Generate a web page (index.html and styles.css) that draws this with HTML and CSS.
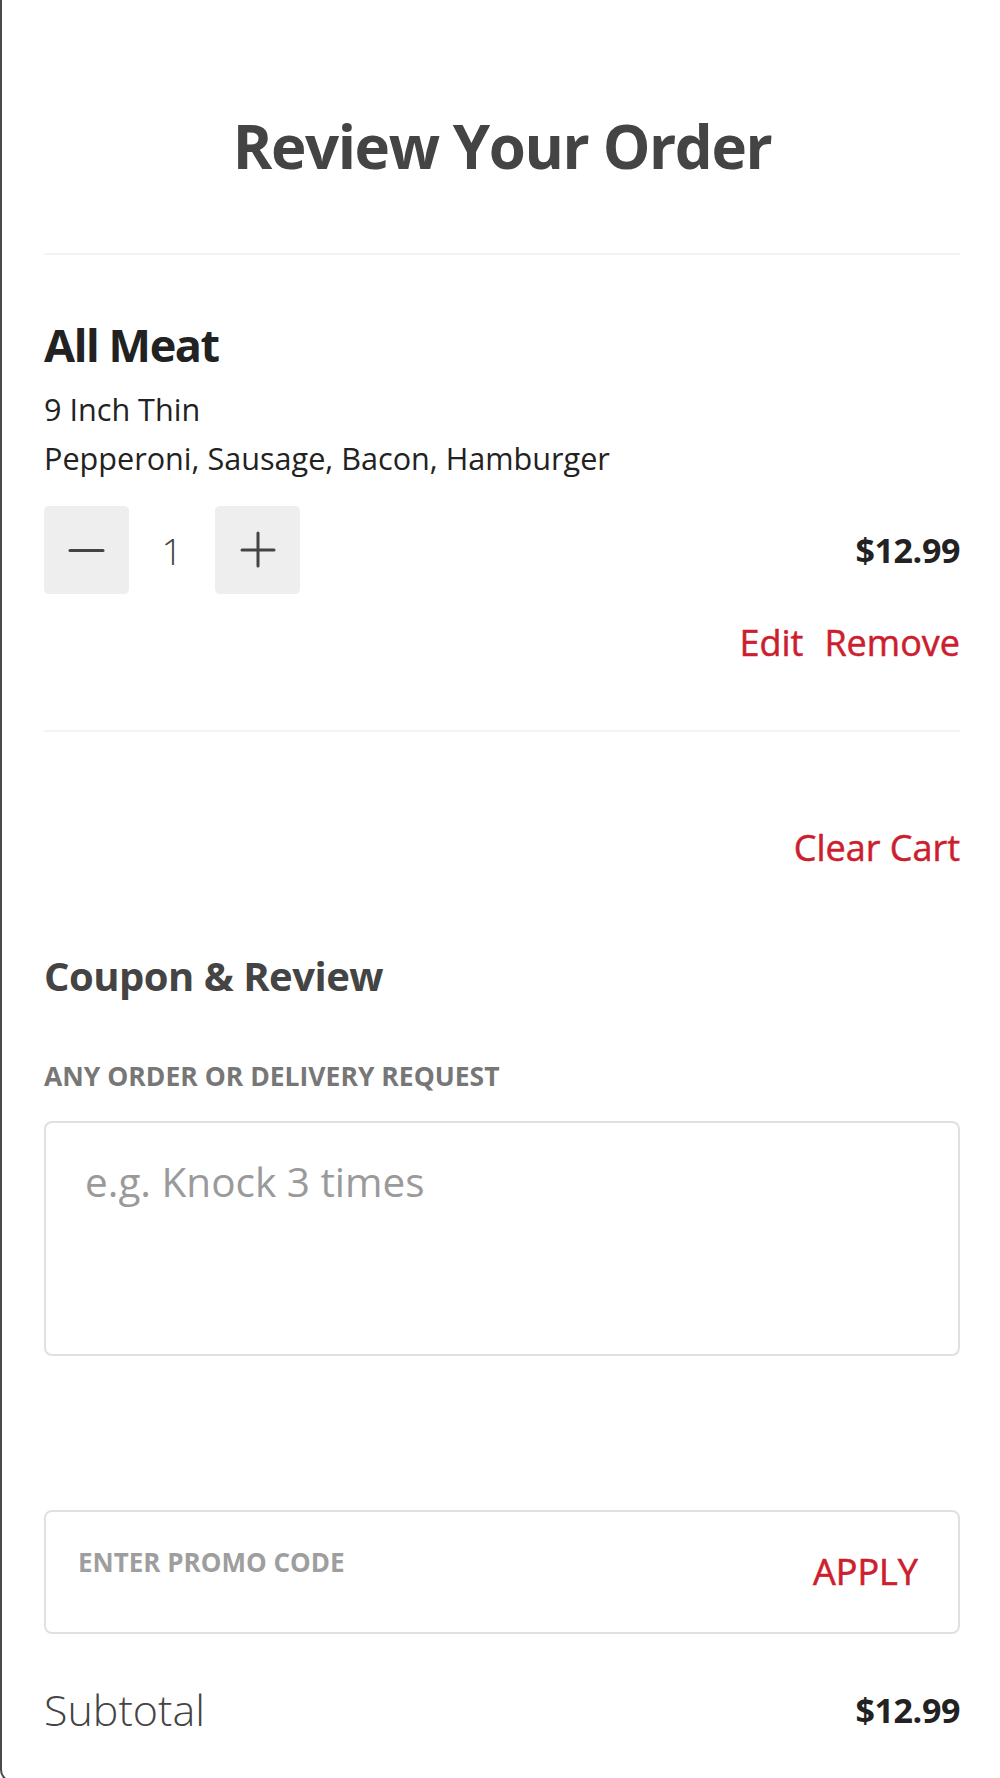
FILE: index.html
```html
<!DOCTYPE html>
<html lang="en">
<head>
<meta charset="utf-8">
<title>Review Your Order</title>
<link rel="stylesheet" href="styles.css">
</head>
<body>
<div class="frame">
  <header class="header">
    <h1 class="title">Review Your Order</h1>
  </header>

  <section class="item">
    <h2 class="item-name">All Meat</h2>
    <p class="item-desc">9 Inch Thin</p>
    <p class="item-desc">Pepperoni, Sausage, Bacon, Hamburger</p>
    <div class="item-row">
      <div class="qty">
        <button class="qty-btn" aria-label="Decrease">
          <svg width="85" height="88" viewBox="0 0 85 88"><path d="M26 44.5H59" stroke="#444" stroke-width="3" stroke-linecap="round"/></svg>
        </button>
        <span class="qty-num">1</span>
        <button class="qty-btn" aria-label="Increase">
          <svg width="85" height="88" viewBox="0 0 85 88"><path d="M27 44H59M43 27V60" stroke="#444" stroke-width="3" stroke-linecap="round"/></svg>
        </button>
      </div>
      <span class="price">$12.99</span>
    </div>
    <div class="item-actions">
      <a class="link">Edit</a>
      <a class="link">Remove</a>
    </div>
  </section>

  <div class="clear-row">
    <a class="link">Clear Cart</a>
  </div>

  <section class="coupon">
    <h2 class="section-title">Coupon &amp; Review</h2>
    <label class="field-label">ANY ORDER OR DELIVERY REQUEST</label>
    <textarea class="request" placeholder="e.g. Knock 3 times"></textarea>
    <div class="promo">
      <input class="promo-input" type="text" placeholder="ENTER PROMO CODE">
      <a class="apply">APPLY</a>
    </div>
  </section>

  <div class="subtotal">
    <span class="subtotal-label">Subtotal</span>
    <span class="price">$12.99</span>
  </div>
</div>
</body>
</html>
```

FILE: styles.css
```css
html, body {
  margin: 0;
  padding: 0;
  background: #fff;
  height: 1778px;
  overflow: hidden;
}

body {
  font-family: "Open Sans", "Noto Sans", sans-serif;
  color: #222;
}

.frame {
  box-sizing: border-box;
  height: 1782px;
  border-left: 2px solid #4a4a4a;
  border-bottom: 2px solid #4a4a4a;
  border-bottom-left-radius: 12px;
  padding: 0 40px 0 42px;
}

.header {
  padding-top: 106px;
  padding-bottom: 67px;
  border-bottom: 2px solid #f3f3f3;
}

.title {
  margin: 0;
  text-align: center;
  font-size: 60px;
  line-height: 80px;
  font-weight: 700;
  letter-spacing: -1.4px;
  color: #444;
}

.item {
  padding-top: 60px;
  padding-bottom: 62px;
  border-bottom: 2px solid #f3f3f3;
}

.item-name {
  margin: 0 0 10px;
  font-size: 45px;
  line-height: 60px;
  font-weight: 700;
  letter-spacing: -1.4px;
  color: #222;
}

.item-desc {
  margin: 0;
  font-size: 30.6px;
  line-height: 49px;
  font-weight: 400;
  color: #222;
}

.item-row {
  margin-top: 23px;
  display: flex;
  align-items: center;
  justify-content: space-between;
}

.qty {
  display: flex;
  align-items: center;
}

.qty-btn {
  width: 85px;
  height: 88px;
  padding: 0;
  border: none;
  border-radius: 5px;
  background: #eeeeee;
  display: flex;
}

.qty-num {
  width: 86px;
  text-align: center;
  font-size: 37px;
  font-weight: 300;
  color: #444;
}

.price {
  font-size: 34px;
  font-weight: 700;
  letter-spacing: -0.4px;
  color: #222;
}

.item-actions {
  margin-top: 24px;
  display: flex;
  justify-content: flex-end;
  gap: 21px;
}

.link {
  font-size: 36px;
  line-height: 50px;
  font-weight: 400;
  color: #cc1e2e;
  -webkit-text-stroke: 0.5px #cc1e2e;
}

.clear-row {
  margin-top: 91px;
  display: flex;
  justify-content: flex-end;
}

.coupon {
  margin-top: 75px;
  display: flex;
  flex-direction: column;
}

.section-title {
  margin: 0;
  font-size: 40px;
  line-height: 56px;
  font-weight: 700;
  letter-spacing: -0.5px;
  color: #444;
}

.field-label {
  margin-top: 54px;
  font-size: 26.5px;
  line-height: 36px;
  font-weight: 700;
  letter-spacing: 0;
  color: #777;
}

.request {
  box-sizing: border-box;
  margin-top: 27px;
  width: 916px;
  height: 235px;
  padding: 32px 39px 0;
  border: 2px solid #e0e0e0;
  border-radius: 8px;
  resize: none;
  font-family: "Open Sans", "Noto Sans", sans-serif;
  font-size: 40.5px;
  line-height: 54px;
  color: #222;
  outline: none;
}

.request::placeholder {
  color: #9a9a9a;
}

.promo {
  box-sizing: border-box;
  margin-top: 154px;
  width: 916px;
  height: 124px;
  border: 2px solid #e0e0e0;
  border-radius: 8px;
  display: flex;
  align-items: center;
  padding: 0 40px 0 32px;
}

.promo-input {
  flex: 1;
  align-self: flex-start;
  margin-top: 32px;
  height: 36px;
  padding: 0;
  border: none;
  outline: none;
  font-family: "Open Sans", "Noto Sans", sans-serif;
  font-size: 26px;
  line-height: 36px;
  font-weight: 700;
  color: #222;
  background: transparent;
}

.promo-input::placeholder {
  color: #9e9e9e;
}

.apply {
  font-size: 36px;
  line-height: 50px;
  font-weight: 400;
  color: #cc1e2e;
  -webkit-text-stroke: 0.6px #cc1e2e;
}

.subtotal {
  margin-top: 48px;
  display: flex;
  align-items: center;
  justify-content: space-between;
}

.subtotal-label {
  font-size: 43px;
  line-height: 56px;
  font-weight: 300;
  color: #444;
}
```
